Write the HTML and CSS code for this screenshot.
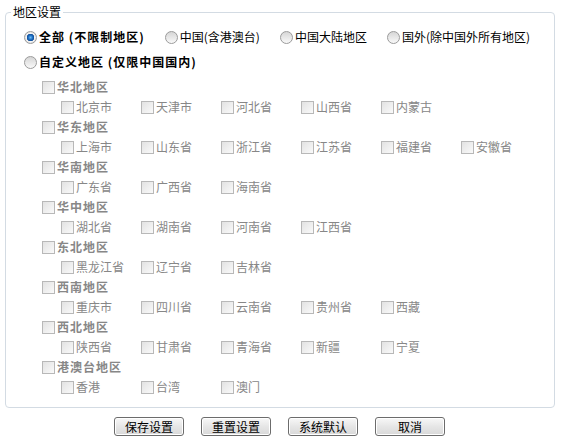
FILE: index.html
```html
<!DOCTYPE html>
<html lang="zh-CN">
<head>
  <meta charset="UTF-8" />
  <title>地区设置</title>
  <link rel="stylesheet" href="styles.css">
</head>
<body>
  <fieldset class="region-box">
    <legend>地区设置</legend>
    <div class="region-body">
      <div class="mode-row">
        <label class="mode strong"><input type="radio" name="area" checked>全部 (不限制地区)</label>
        <label class="mode"><input type="radio" name="area">中国(含港澳台)</label>
        <label class="mode"><input type="radio" name="area">中国大陆地区</label>
        <label class="mode"><input type="radio" name="area">国外(除中国外所有地区)</label>
      </div>
      <div class="mode-row">
        <label class="mode strong"><input type="radio" name="area">自定义地区 (仅限中国国内)</label>
      </div>

      <div class="regions">
        <label class="group-title"><input type="checkbox" disabled>华北地区</label>
        <div class="cities">
          <label class="city"><input type="checkbox" disabled>北京市</label>
          <label class="city"><input type="checkbox" disabled>天津市</label>
          <label class="city"><input type="checkbox" disabled>河北省</label>
          <label class="city"><input type="checkbox" disabled>山西省</label>
          <label class="city"><input type="checkbox" disabled>内蒙古</label>
        </div>

        <label class="group-title"><input type="checkbox" disabled>华东地区</label>
        <div class="cities">
          <label class="city"><input type="checkbox" disabled>上海市</label>
          <label class="city"><input type="checkbox" disabled>山东省</label>
          <label class="city"><input type="checkbox" disabled>浙江省</label>
          <label class="city"><input type="checkbox" disabled>江苏省</label>
          <label class="city"><input type="checkbox" disabled>福建省</label>
          <label class="city"><input type="checkbox" disabled>安徽省</label>
        </div>

        <label class="group-title"><input type="checkbox" disabled>华南地区</label>
        <div class="cities">
          <label class="city"><input type="checkbox" disabled>广东省</label>
          <label class="city"><input type="checkbox" disabled>广西省</label>
          <label class="city"><input type="checkbox" disabled>海南省</label>
        </div>

        <label class="group-title"><input type="checkbox" disabled>华中地区</label>
        <div class="cities">
          <label class="city"><input type="checkbox" disabled>湖北省</label>
          <label class="city"><input type="checkbox" disabled>湖南省</label>
          <label class="city"><input type="checkbox" disabled>河南省</label>
          <label class="city"><input type="checkbox" disabled>江西省</label>
        </div>

        <label class="group-title"><input type="checkbox" disabled>东北地区</label>
        <div class="cities">
          <label class="city"><input type="checkbox" disabled>黑龙江省</label>
          <label class="city"><input type="checkbox" disabled>辽宁省</label>
          <label class="city"><input type="checkbox" disabled>吉林省</label>
        </div>

        <label class="group-title"><input type="checkbox" disabled>西南地区</label>
        <div class="cities">
          <label class="city"><input type="checkbox" disabled>重庆市</label>
          <label class="city"><input type="checkbox" disabled>四川省</label>
          <label class="city"><input type="checkbox" disabled>云南省</label>
          <label class="city"><input type="checkbox" disabled>贵州省</label>
          <label class="city"><input type="checkbox" disabled>西藏</label>
        </div>

        <label class="group-title"><input type="checkbox" disabled>西北地区</label>
        <div class="cities">
          <label class="city"><input type="checkbox" disabled>陕西省</label>
          <label class="city"><input type="checkbox" disabled>甘肃省</label>
          <label class="city"><input type="checkbox" disabled>青海省</label>
          <label class="city"><input type="checkbox" disabled>新疆</label>
          <label class="city"><input type="checkbox" disabled>宁夏</label>
        </div>

        <label class="group-title"><input type="checkbox" disabled>港澳台地区</label>
        <div class="cities">
          <label class="city"><input type="checkbox" disabled>香港</label>
          <label class="city"><input type="checkbox" disabled>台湾</label>
          <label class="city"><input type="checkbox" disabled>澳门</label>
        </div>
      </div>
    </div>
  </fieldset>

  <div class="actions">
    <button class="btn">保存设置</button>
    <button class="btn">重置设置</button>
    <button class="btn">系统默认</button>
    <button class="btn">取消</button>
  </div>
</body>
</html>
```

FILE: styles.css
```css
body {
  margin: 0;
  padding: 5px 8px 0 5px;
  font: 12px/1.2 "Noto Sans CJK SC", sans-serif;
  color: #000;
  background: #fff;
}

.region-box {
  margin: 0;
  padding: 0;
  width: 550px;
  box-sizing: border-box;
  border: 1px solid #d3dbe3;
  border-radius: 4px;
}

.region-box legend {
  margin-left: 5px;
  padding: 0 2px;
  line-height: 14px;
}

.region-body {
  padding: 6px 0 10px 18px;
}

/* top radio choices */
.mode-row {
  display: flex;
  align-items: center;
  gap: 20px;
  height: 25px;
}

.mode {
  display: flex;
  align-items: center;
  white-space: nowrap;
}

.strong {
  font-weight: bold;
  letter-spacing: 1px;
}

input[type="radio"] {
  appearance: none;
  width: 13px;
  height: 13px;
  margin: 0 2px 0 0;
  border: 1px solid #9b9b9b;
  border-radius: 50%;
  background: linear-gradient(#d6d6d6, #f9f9f9);
}

input[type="radio"]:checked {
  background: radial-gradient(circle, #6bbcf2 0, #2373c6 2px, #0f4d99 3.5px, #f4f4f4 4px, #dcdcdc 6px);
}

/* region checkboxes */
.regions {
  margin-top: 2px;
  padding-left: 18px;
}

.group-title {
  display: flex;
  align-items: center;
  height: 20px;
  font-weight: bold;
  letter-spacing: 1px;
  color: #878787;
}

.cities {
  display: grid;
  grid-template-columns: repeat(6, 80px);
  height: 20px;
  padding-left: 19px;
}

.city {
  display: flex;
  align-items: center;
  color: #878787;
  white-space: nowrap;
}

input[type="checkbox"] {
  appearance: none;
  width: 13px;
  height: 13px;
  margin: 0 2px 0 0;
  border: 1px solid #b8b8b8;
  background: linear-gradient(135deg, #e2e2e2, #fafafa);
}

/* bottom buttons */
.actions {
  display: flex;
  justify-content: center;
  gap: 17px;
  margin-top: 9px;
}

.btn {
  width: 70px;
  height: 19px;
  padding: 0;
  font: inherit;
  line-height: 17px;
  color: #000;
  border: 1px solid #6c6c6c;
  border-radius: 3px;
  background: linear-gradient(#f8f8f8, #e6e6e6 50%, #d9d9d9);
  box-shadow: inset 0 0 0 1px #fff;
}
```
